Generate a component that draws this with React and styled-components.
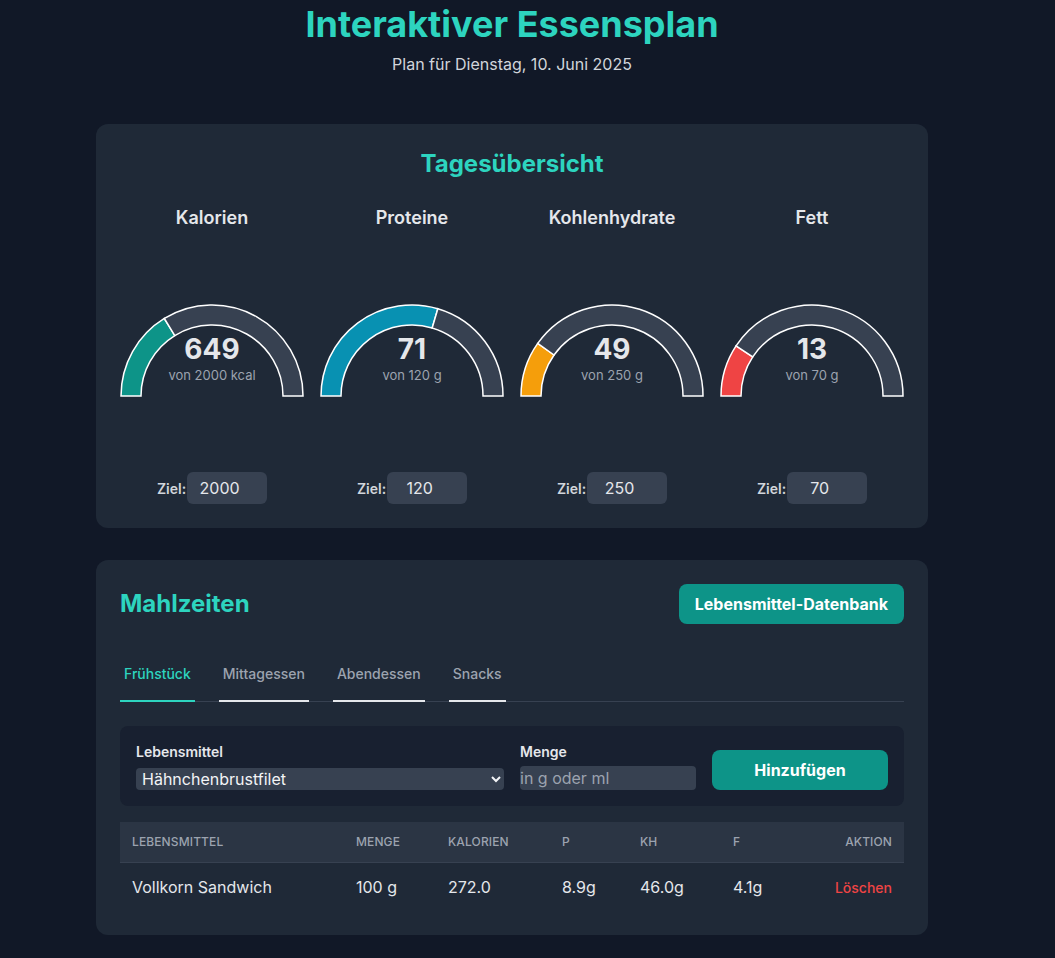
import React from 'react';
import styled, { createGlobalStyle } from 'styled-components';

const GlobalStyle = createGlobalStyle`
  body {
    margin: 0;
    background: #111827;
    font-family: Inter, "Noto Sans", sans-serif;
    color: #e5e7eb;
  }
  * { box-sizing: border-box; }
`

const Page = styled.div`
  width: 1024px;
  padding-bottom: 24px;
`

const Container = styled.div`
  max-width: 896px;
  margin: 0 auto;
  padding: 4px 32px 0;
`

const Header = styled.header`
  text-align: center;
  margin-bottom: 48px;
`

const Title = styled.h1`
  margin: 0;
  font-size: 36px;
  line-height: 40px;
  font-weight: 700;
  color: #2dd4bf;
`

const Subtitle = styled.p`
  margin: 8px 0 0;
  font-size: 16px;
  line-height: 24px;
  color: #d1d5db;
`

const Card = styled.section`
  background: #1f2937;
  border-radius: 12px;
  padding: 24px;
  margin-bottom: 32px;
`

const CardTitle = styled.h2`
  margin: 0;
  font-size: 24px;
  line-height: 32px;
  font-weight: 700;
  color: #2dd4bf;
  text-align: ${p => (p.center ? 'center' : 'left')};
`

const GaugeGrid = styled.div`
  display: grid;
  grid-template-columns: repeat(4, 1fr);
  gap: 16px;
  margin-top: 24px;
`

const GaugeColumn = styled.div`
  display: flex;
  flex-direction: column;
  align-items: center;
`

const GaugeLabel = styled.h3`
  margin: 0;
  font-size: 18px;
  line-height: 28px;
  font-weight: 600;
  color: #e5e7eb;
`

const GaugeBox = styled.div`
  position: relative;
  width: 184px;
  height: 225px;
  margin-top: 7px;
`

const GaugeText = styled.div`
  position: absolute;
  left: 0;
  right: 0;
  top: 94px;
  text-align: center;
`

const GaugeValue = styled.div`
  font-size: 28px;
  line-height: 32px;
  font-weight: 700;
  color: #e5e7eb;
`

const GaugeSub = styled.div`
  font-size: 13px;
  line-height: 16px;
  color: #9ca3af;
  margin-top: 2px;
`

const GoalRow = styled.div`
  display: flex;
  align-items: center;
  gap: 1px;
  margin-top: 8px;
`

const GoalLabel = styled.label`
  font-size: 14px;
  font-weight: 600;
  color: #d1d5db;
`

const GoalInput = styled.input`
  width: 80px;
  height: 32px;
  border: none;
  border-radius: 6px;
  background: #374151;
  color: #e5e7eb;
  font-family: inherit;
  font-size: 16px;
  text-align: center;
  padding: 0 23px 0 8px;
  outline: none;
`

const MealHeader = styled.div`
  display: flex;
  justify-content: space-between;
  align-items: center;
`

const PrimaryButton = styled.button`
  height: 40px;
  padding: 0 16px;
  border: none;
  border-radius: 8px;
  background: #0d9488;
  color: #ffffff;
  font-family: inherit;
  font-size: 16px;
  font-weight: 700;
  cursor: pointer;
  width: ${p => (p.full ? '100%' : 'auto')};
`

const TabList = styled.div`
  display: flex;
  gap: 24px;
  margin-top: 24px;
  border-bottom: 1px solid #374151;
`

const Tab = styled.button`
  background: none;
  border: none;
  border-bottom: 2px solid ${p => (p.active ? '#2dd4bf' : '#e5e7eb')};
  margin-bottom: -1px;
  padding: 16px 4px 16px;
  font-family: inherit;
  font-size: 14px;
  line-height: 20px;
  font-weight: 500;
  color: ${p => (p.active ? '#2dd4bf' : '#9ca3af')};
  cursor: pointer;
`

const AddForm = styled.div`
  display: grid;
  grid-template-columns: minmax(0, 23fr) minmax(0, 11fr) minmax(0, 11fr);
  gap: 16px;
  align-items: end;
  margin-top: 24px;
  padding: 16px;
  border-radius: 8px;
  background: #182030;
`

const Field = styled.div`
  display: flex;
  flex-direction: column;
`

const FieldLabel = styled.label`
  font-size: 14px;
  line-height: 20px;
  font-weight: 600;
  color: #e5e7eb;
  margin-bottom: ${p => p.gap || '4px'};
`

const Select = styled.select`
  height: 22px;
  border: none;
  border-radius: 4px;
  background: #374151;
  color: #f3f4f6;
  font-family: inherit;
  font-size: 16px;
  padding: 0 2px;
  outline: none;
`

const TextInput = styled.input`
  height: 24px;
  border: none;
  border-radius: 4px;
  background: #374151;
  color: #f3f4f6;
  font-family: inherit;
  font-size: 16px;
  padding: 0;
  outline: none;
  &::placeholder { color: #9ca3af; }
`

const Table = styled.table`
  width: 100%;
  margin-top: 16px;
  border-collapse: collapse;
  table-layout: fixed;
`

const Th = styled.th`
  background: #2b3544;
  padding: 12px;
  font-size: 12px;
  line-height: 16px;
  font-weight: 500;
  letter-spacing: 0.01em;
  text-transform: uppercase;
  color: #9ca3af;
  text-align: ${p => p.align || 'left'};
  width: ${p => p.w || 'auto'};
  border-bottom: 1px solid #374151;
`

const Td = styled.td`
  padding: 12px;
  font-size: 16px;
  line-height: 24px;
  color: #e5e7eb;
  text-align: ${p => p.align || 'left'};
`

const DeleteLink = styled.button`
  background: none;
  border: none;
  padding: 0;
  font-family: inherit;
  font-size: 14px;
  font-weight: 500;
  color: #ef4444;
  cursor: pointer;
`

const CX = 92, CY = 157, R = 91, RI = 71;

function pt(r, deg) {
  const a = (deg * Math.PI) / 180;
  return [CX - r * Math.cos(a), CY - r * Math.sin(a)];
}

function arc(a0, a1) {
  const [x0, y0] = pt(R, a0);
  const [x1, y1] = pt(R, a1);
  const [x2, y2] = pt(RI, a1);
  const [x3, y3] = pt(RI, a0);
  return `M${x0} ${y0} A${R} ${R} 0 0 1 ${x1} ${y1} L${x2} ${y2} A${RI} ${RI} 0 0 0 ${x3} ${y3} Z`;
}

function Gauge({ label, value, goal, unit, color }) {
  const split = Math.min(value / goal, 1) * 180;
  return (
    <GaugeColumn>
      <GaugeLabel>{label}</GaugeLabel>
      <GaugeBox>
        <svg width="184" height="225" viewBox="0 0 184 225">
          <path d={arc(0, split)} fill={color} stroke="#ffffff" strokeWidth="1.5" />
          <path d={arc(split, 180)} fill="#374151" stroke="#ffffff" strokeWidth="1.5" />
        </svg>
        <GaugeText>
          <GaugeValue>{value}</GaugeValue>
          <GaugeSub>von {goal} {unit}</GaugeSub>
        </GaugeText>
      </GaugeBox>
      <GoalRow>
        <GoalLabel>Ziel:</GoalLabel>
        <GoalInput defaultValue={goal} />
      </GoalRow>
    </GaugeColumn>
  );
}

const gauges = [
  { label: 'Kalorien', value: 649, goal: 2000, unit: 'kcal', color: '#0d9488' },
  { label: 'Proteine', value: 71, goal: 120, unit: 'g', color: '#0891b2' },
  { label: 'Kohlenhydrate', value: 49, goal: 250, unit: 'g', color: '#f59e0b' },
  { label: 'Fett', value: 13, goal: 70, unit: 'g', color: '#ef4444' },
];

const tabs = ['Frühstück', 'Mittagessen', 'Abendessen', 'Snacks'];

export default function App() {
  return (
    <Page>
      <GlobalStyle />
      <Container>
        <Header>
          <Title>Interaktiver Essensplan</Title>
          <Subtitle>Plan für Dienstag, 10. Juni 2025</Subtitle>
        </Header>

        <Card>
          <CardTitle center>Tagesübersicht</CardTitle>
          <GaugeGrid>
            {gauges.map(g => <Gauge key={g.label} {...g} />)}
          </GaugeGrid>
        </Card>

        <Card>
          <MealHeader>
            <CardTitle>Mahlzeiten</CardTitle>
            <PrimaryButton>Lebensmittel-Datenbank</PrimaryButton>
          </MealHeader>
          <TabList>
            {tabs.map((t, i) => <Tab key={t} active={i === 0}>{t}</Tab>)}
          </TabList>

          <AddForm>
            <Field>
              <FieldLabel gap="6px">Lebensmittel</FieldLabel>
              <Select defaultValue="huhn">
                <option value="huhn">Hähnchenbrustfilet</option>
                <option value="sandwich">Vollkorn Sandwich</option>
              </Select>
            </Field>
            <Field>
              <FieldLabel>Menge</FieldLabel>
              <TextInput placeholder="in g oder ml" />
            </Field>
            <PrimaryButton full>Hinzufügen</PrimaryButton>
          </AddForm>

          <Table>
            <thead>
              <tr>
                <Th w="224px">Lebensmittel</Th>
                <Th w="92px">Menge</Th>
                <Th w="114px">Kalorien</Th>
                <Th w="78px">P</Th>
                <Th w="93px">KH</Th>
                <Th w="90px">F</Th>
                <Th align="right">Aktion</Th>
              </tr>
            </thead>
            <tbody>
              <tr>
                <Td>Vollkorn Sandwich</Td>
                <Td>100 g</Td>
                <Td>272.0</Td>
                <Td>8.9g</Td>
                <Td>46.0g</Td>
                <Td>4.1g</Td>
                <Td align="right"><DeleteLink>Löschen</DeleteLink></Td>
              </tr>
            </tbody>
          </Table>
        </Card>
      </Container>
    </Page>
  );
}
